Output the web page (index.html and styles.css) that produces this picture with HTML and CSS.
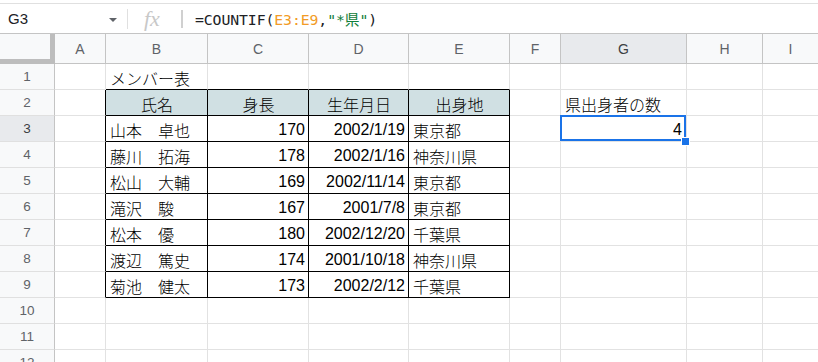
FILE: index.html
```html
<!DOCTYPE html>
<html lang="ja">
<head>
<meta charset="utf-8">
<title>Sheet</title>
<link rel="stylesheet" href="styles.css">
</head>
<body>
<div class="topstrip"></div>
<div class="fbar">
  <div class="namebox"><span class="ref">G3</span><span class="caret"></span></div>
  <div class="sep"></div>
  <span class="fx">fx</span>
  <div class="sep2"></div>
  <div class="formula">=COUNTIF(<span class="or">E3:E9</span>,<span class="gr">"*県"</span>)</div>
</div>
<div class="sheet">
  <div class="corner"></div>
  <div class="ch">A</div><div class="ch">B</div><div class="ch">C</div><div class="ch">D</div><div class="ch">E</div><div class="ch">F</div><div class="ch sel">G</div><div class="ch">H</div><div class="ch">I</div>

  <div class="rh">1</div>
  <div class="c"></div><div class="c tt l">メンバー表</div><div class="c tt"></div><div class="c tt"></div><div class="c tt"></div><div class="c"></div><div class="c"></div><div class="c"></div><div class="c"></div>

  <div class="rh">2</div>
  <div class="c tl"></div><div class="c t hd">氏名</div><div class="c t hd">身長</div><div class="c t hd">生年月日</div><div class="c t hd">出身地</div><div class="c"></div><div class="c l">県出身者の数</div><div class="c"></div><div class="c"></div>

  <div class="rh sel">3</div>
  <div class="c tl"></div><div class="c t l">山本　卓也</div><div class="c t r">170</div><div class="c t r">2002/1/19</div><div class="c t l">東京都</div><div class="c"></div><div class="c r active">4</div><div class="c"></div><div class="c"></div>

  <div class="rh">4</div>
  <div class="c tl"></div><div class="c t l">藤川　拓海</div><div class="c t r">178</div><div class="c t r">2002/1/16</div><div class="c t l">神奈川県</div><div class="c"></div><div class="c"></div><div class="c"></div><div class="c"></div>

  <div class="rh">5</div>
  <div class="c tl"></div><div class="c t l">松山　大輔</div><div class="c t r">169</div><div class="c t r">2002/11/14</div><div class="c t l">東京都</div><div class="c"></div><div class="c"></div><div class="c"></div><div class="c"></div>

  <div class="rh">6</div>
  <div class="c tl"></div><div class="c t l">滝沢　駿</div><div class="c t r">167</div><div class="c t r">2001/7/8</div><div class="c t l">東京都</div><div class="c"></div><div class="c"></div><div class="c"></div><div class="c"></div>

  <div class="rh">7</div>
  <div class="c tl"></div><div class="c t l">松本　優</div><div class="c t r">180</div><div class="c t r">2002/12/20</div><div class="c t l">千葉県</div><div class="c"></div><div class="c"></div><div class="c"></div><div class="c"></div>

  <div class="rh">8</div>
  <div class="c tl"></div><div class="c t l">渡辺　篤史</div><div class="c t r">174</div><div class="c t r">2001/10/18</div><div class="c t l">神奈川県</div><div class="c"></div><div class="c"></div><div class="c"></div><div class="c"></div>

  <div class="rh">9</div>
  <div class="c tl"></div><div class="c t l">菊池　健太</div><div class="c t r">173</div><div class="c t r">2002/2/12</div><div class="c t l">千葉県</div><div class="c"></div><div class="c"></div><div class="c"></div><div class="c"></div>

  <div class="rh">10</div>
  <div class="c"></div><div class="c"></div><div class="c"></div><div class="c"></div><div class="c"></div><div class="c"></div><div class="c"></div><div class="c"></div><div class="c"></div>

  <div class="rh">11</div>
  <div class="c"></div><div class="c"></div><div class="c"></div><div class="c"></div><div class="c"></div><div class="c"></div><div class="c"></div><div class="c"></div><div class="c"></div>

  <div class="rh">12</div>
  <div class="c"></div><div class="c"></div><div class="c"></div><div class="c"></div><div class="c"></div><div class="c"></div><div class="c"></div><div class="c"></div><div class="c"></div>
</div>
</body>
</html>
```
FILE: styles.css
```css
html, body {
  margin: 0;
  padding: 0;
  background: #fff;
  overflow: hidden;
}
body {
  width: 818px;
  height: 362px;
  font-family: "Liberation Sans", "Noto Sans CJK JP", sans-serif;
}
.topstrip {
  height: 3px;
  border-bottom: 1px solid #e0e0e0;
}
.fbar {
  height: 29px;
  border-bottom: 1px solid #c4c4c4;
  display: flex;
  align-items: center;
}
.namebox {
  width: 127px;
  display: flex;
  align-items: center;
  justify-content: space-between;
  padding-left: 8px;
  box-sizing: border-box;
  padding-right: 10px;
}
.ref {
  font-size: 15px;
  color: #202124;
}
.caret {
  width: 0;
  height: 0;
  border-left: 4px solid transparent;
  border-right: 4px solid transparent;
  border-top: 4px solid #5f6368;
  margin-top: 2px;
}
.sep {
  width: 1px;
  height: 20px;
  background: #e0e0e0;
}
.fx {
  font-family: "Liberation Serif", serif;
  font-style: italic;
  font-size: 22px;
  color: #c8c8c8;
  margin-left: 16px;
  width: 37px;
  line-height: 1;
}
.sep2 {
  width: 2px;
  height: 18px;
  background: #d0d0d0;
}
.formula {
  margin-left: 12px;
  font-family: "DejaVu Sans Mono", "Noto Sans CJK JP", monospace;
  font-size: 14.8px;
  letter-spacing: -0.1px;
  color: #202124;
}
.or { color: #f29b26; }
.gr { color: #11803a; }

.sheet {
  display: grid;
  grid-template-columns: 55px 51px 102px 101px 100px 101px 51px 126px 76px 56px;
  grid-template-rows: 30px;
  grid-auto-rows: 26px;
}
.sheet > div {
  box-sizing: border-box;
  min-width: 0;
}
.corner {
  background: #f8f9fa;
  border-right: 5px solid #bdbdbd;
  border-bottom: 5px solid #bdbdbd;
}
.ch {
  background: #f8f9fa;
  border-right: 1px solid #c4c4c4;
  border-bottom: 1px solid #c4c4c4;
  display: flex;
  align-items: center;
  justify-content: center;
  font-size: 14px;
  color: #5f6368;
  padding-top: 1px;
}
.rh {
  background: #f8f9fa;
  border-right: 1px solid #c4c4c4;
  border-bottom: 1px solid #e0e0e0;
  display: flex;
  align-items: center;
  justify-content: center;
  font-size: 13.5px;
  color: #5f6368;
}
.ch.sel, .rh.sel {
  background: #e8eaed;
  color: #3c4043;
}
.c {
  border-right: 1px solid #e2e2e2;
  border-bottom: 1px solid #e2e2e2;
  display: flex;
  align-items: center;
  font-size: 16px;
  font-weight: 300;
  color: #000;
  white-space: nowrap;
  padding: 2px 3px 0 4px;
}
.c.l { justify-content: flex-start; }
.c.r {
  justify-content: flex-end;
  padding-right: 3px;
  font-weight: 400;
}
.c.hd {
  justify-content: center;
  background: #d0e0e3;
}
.c.t {
  border-right-color: #000;
  border-bottom-color: #000;
}
.c.tl { border-right-color: #000; }
.c.tt { border-bottom-color: #000; }
.c.active {
  position: relative;
  padding-right: 4px;
}
.c.active::after {
  content: "";
  position: absolute;
  left: -1px;
  top: -1px;
  right: 0;
  bottom: 0;
  border: 2px solid #1a73e8;
}
.c.active::before {
  content: "";
  position: absolute;
  right: -4px;
  bottom: -5px;
  width: 7px;
  height: 7px;
  background: #1a73e8;
  border: 1px solid #fff;
  z-index: 2;
}
```
